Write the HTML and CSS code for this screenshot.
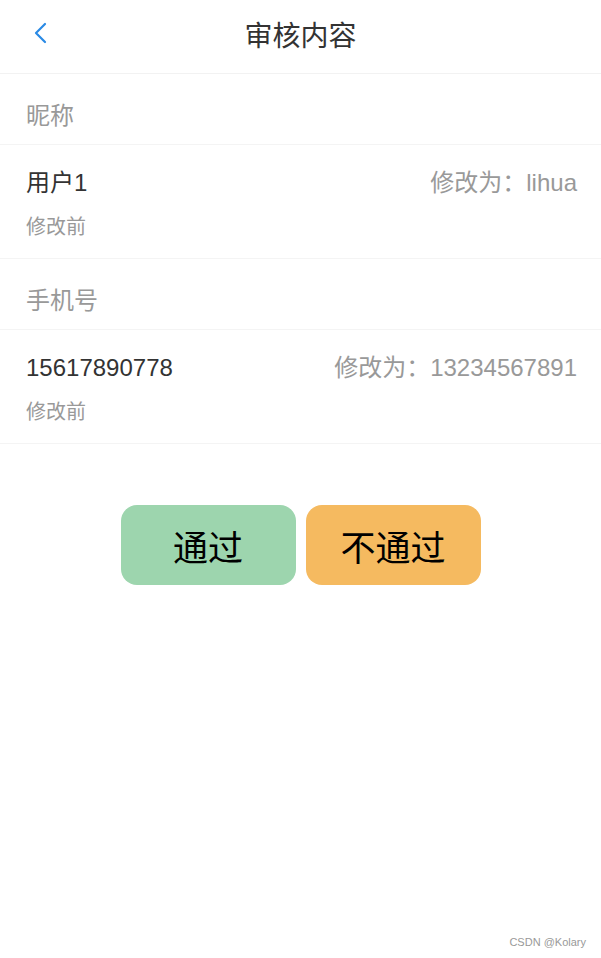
FILE: index.html
```html
<!DOCTYPE html>
<html lang="zh-CN">
<head>
    <meta charset="UTF-8">
    <meta name="viewport" content="width=device-width, initial-scale=1.0">
    <title>审核内容</title>
    <link rel="stylesheet" href="styles.css">
</head>
<body>
    <header class="nav-bar">
        <a class="nav-back" href="#">
            <svg width="14" height="22" viewBox="0 0 14 22">
                <path d="M12 2 L3 11 L12 20" fill="none" stroke="#2a8ae5" stroke-width="2.2" stroke-linecap="round" stroke-linejoin="round"/>
            </svg>
        </a>
        <h1 class="nav-title">审核内容</h1>
    </header>

    <section class="audit-group">
        <div class="group-title">昵称</div>
        <div class="audit-row">
            <div class="row-main">
                <span class="old-value">用户1</span>
                <span class="new-value">修改为：lihua</span>
            </div>
            <div class="row-note">修改前</div>
        </div>
    </section>

    <section class="audit-group">
        <div class="group-title">手机号</div>
        <div class="audit-row">
            <div class="row-main">
                <span class="old-value">15617890778</span>
                <span class="new-value">修改为：13234567891</span>
            </div>
            <div class="row-note">修改前</div>
        </div>
    </section>

    <div class="actions">
        <button class="btn btn-pass">通过</button>
        <button class="btn btn-reject">不通过</button>
    </div>

    <div class="watermark">CSDN @Kolary</div>
</body>
</html>
```

FILE: styles.css
```css
body {
    margin: 0;
    padding: 0;
    background-color: white;
    font-family: "Liberation Sans", Arial, "Noto Sans CJK SC", sans-serif;
    color: #333;
    min-height: 958px;
    position: relative;
}
.nav-bar {
    height: 73px;
    display: flex;
    align-items: center;
    justify-content: center;
    border-bottom: 1px solid #f2f2f2;
    position: relative;
}
.nav-back {
    position: absolute;
    left: 33px;
    top: 22px;
    display: flex;
}
.nav-title {
    margin: 0;
    font-size: 28px;
    font-weight: normal;
    color: #333;
    padding-bottom: 6px;
}
.group-title {
    height: 56px;
    line-height: 56px;
    padding: 14px 26px 0;
    font-size: 24px;
    color: #999;
    border-bottom: 1px solid #f4f4f4;
}
.audit-row {
    padding: 21px 24px 17px 26px;
    border-bottom: 1px solid #f4f4f4;
}
.row-main {
    display: flex;
    justify-content: space-between;
    align-items: center;
    font-size: 24px;
    line-height: 34px;
}
.old-value {
    color: #333;
}
.new-value {
    color: #999;
}
.row-note {
    margin-top: 13px;
    font-size: 20px;
    line-height: 28px;
    color: #999;
}
.actions {
    display: flex;
    justify-content: center;
    gap: 10px;
    margin-top: 61px;
}
.btn {
    width: 175px;
    height: 80px;
    border: none;
    border-radius: 16px;
    font-size: 35px;
    color: #000;
    font-family: "Noto Sans CJK SC", sans-serif;
    cursor: pointer;
}
.btn-pass {
    background-color: #9dd5ae;
}
.btn-reject {
    background-color: #f5ba60;
}
.watermark {
    position: absolute;
    right: 15px;
    bottom: 10px;
    font-size: 11px;
    color: #999;
}
```
